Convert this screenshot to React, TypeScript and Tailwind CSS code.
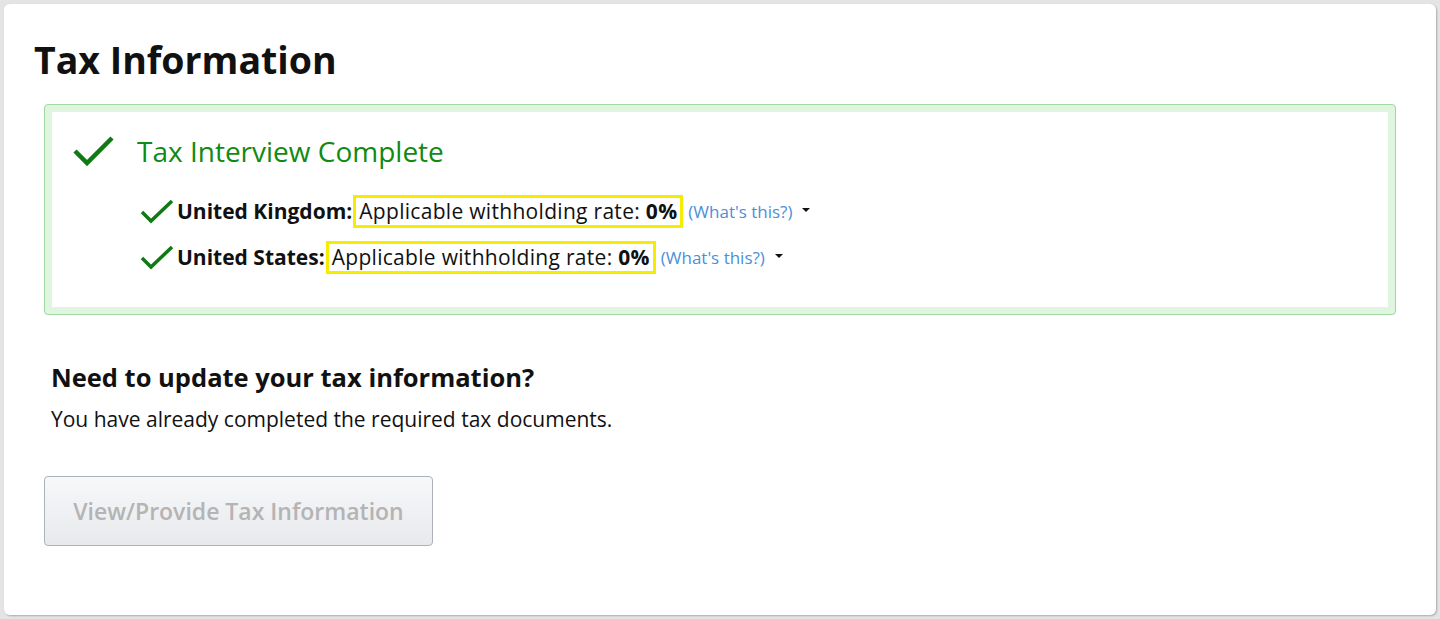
const countries = [
  { name: "United Kingdom:" },
  { name: "United States:" },
];

function Check({ big }: { big?: boolean }) {
  if (big) {
    return (
      <svg width="42" height="32" viewBox="0 0 42 32" className="shrink-0">
        <path d="M2 16 L14 28 L39 3" fill="none" stroke="#0f7a14" strokeWidth="4.5" />
      </svg>
    );
  }
  return (
    <svg width="34" height="26" viewBox="0 0 34 26" className="shrink-0">
      <path d="M2 13 L11 22 L32 2" fill="none" stroke="#0f7a14" strokeWidth="3.5" />
    </svg>
  );
}

export default function App() {
  return (
    <div
      className="h-[619px] w-[1440px] bg-[#e4e4e4] p-[4px]"
      style={{ fontFamily: '"Open Sans", "Noto Sans", Arial, sans-serif' }}
    >
      <div className="flex h-full flex-col rounded-[6px] bg-white px-[30px] pt-[32px] shadow-[1px_1px_2px_rgba(0,0,0,0.25)]">
        <h1 className="text-[37.5px] font-bold leading-[48px] text-[#111]">Tax Information</h1>

        {/* Status box */}
        <div className="mx-[10px] mt-[20px] rounded-[4px] border border-[#9fd8a0] bg-[#dff5df] p-[7px]">
          <div className="h-[195px] bg-white px-[21px] pt-[21px]">
            <div className="flex items-center gap-[22px]">
              <Check big />
              <span className="text-[28px] leading-[36px] text-[#118a11]">Tax Interview Complete</span>
            </div>
            <div className="mt-[26px] flex flex-col gap-[13px] pl-[67px]">
              {countries.map((c) => (
                <div key={c.name} className="flex items-center text-[21px] text-[#111]">
                  <Check />
                  <span className="ml-[3px] font-bold">{c.name}</span>
                  <span className="ml-[1px] border-[3px] border-[#f6ec00] px-[3px] leading-[27px] tracking-[0.3px]">
                    Applicable withholding rate: <b>0%</b>
                  </span>
                  <span className="ml-[5px] text-[17px] text-[#4a90d9]">(What's this?)</span>
                  <span className="ml-[10px] mt-[-4px] h-0 w-0 border-x-[4px] border-t-[4px] border-x-transparent border-t-[#111]" />
                </div>
              ))}
            </div>
          </div>
        </div>

        <div className="px-[17px]">
          <h2 className="mt-[45px] text-[25.5px] font-bold leading-[34px] text-[#111]">
            Need to update your tax information?
          </h2>
          <p className="mt-[11px] text-[21px] leading-[28px] text-[#111]">
            You have already completed the required tax documents.
          </p>
        </div>

        <div className="mx-[10px] mt-[43px]">
          <button className="h-[70px] w-[389px] rounded-[4px] border border-[#adb1b8] bg-gradient-to-b from-[#f7f8fa] to-[#e7e9ec] text-[23px] font-semibold text-[#b4b4b4]">
            View/Provide Tax Information
          </button>
        </div>
      </div>
    </div>
  );
}
